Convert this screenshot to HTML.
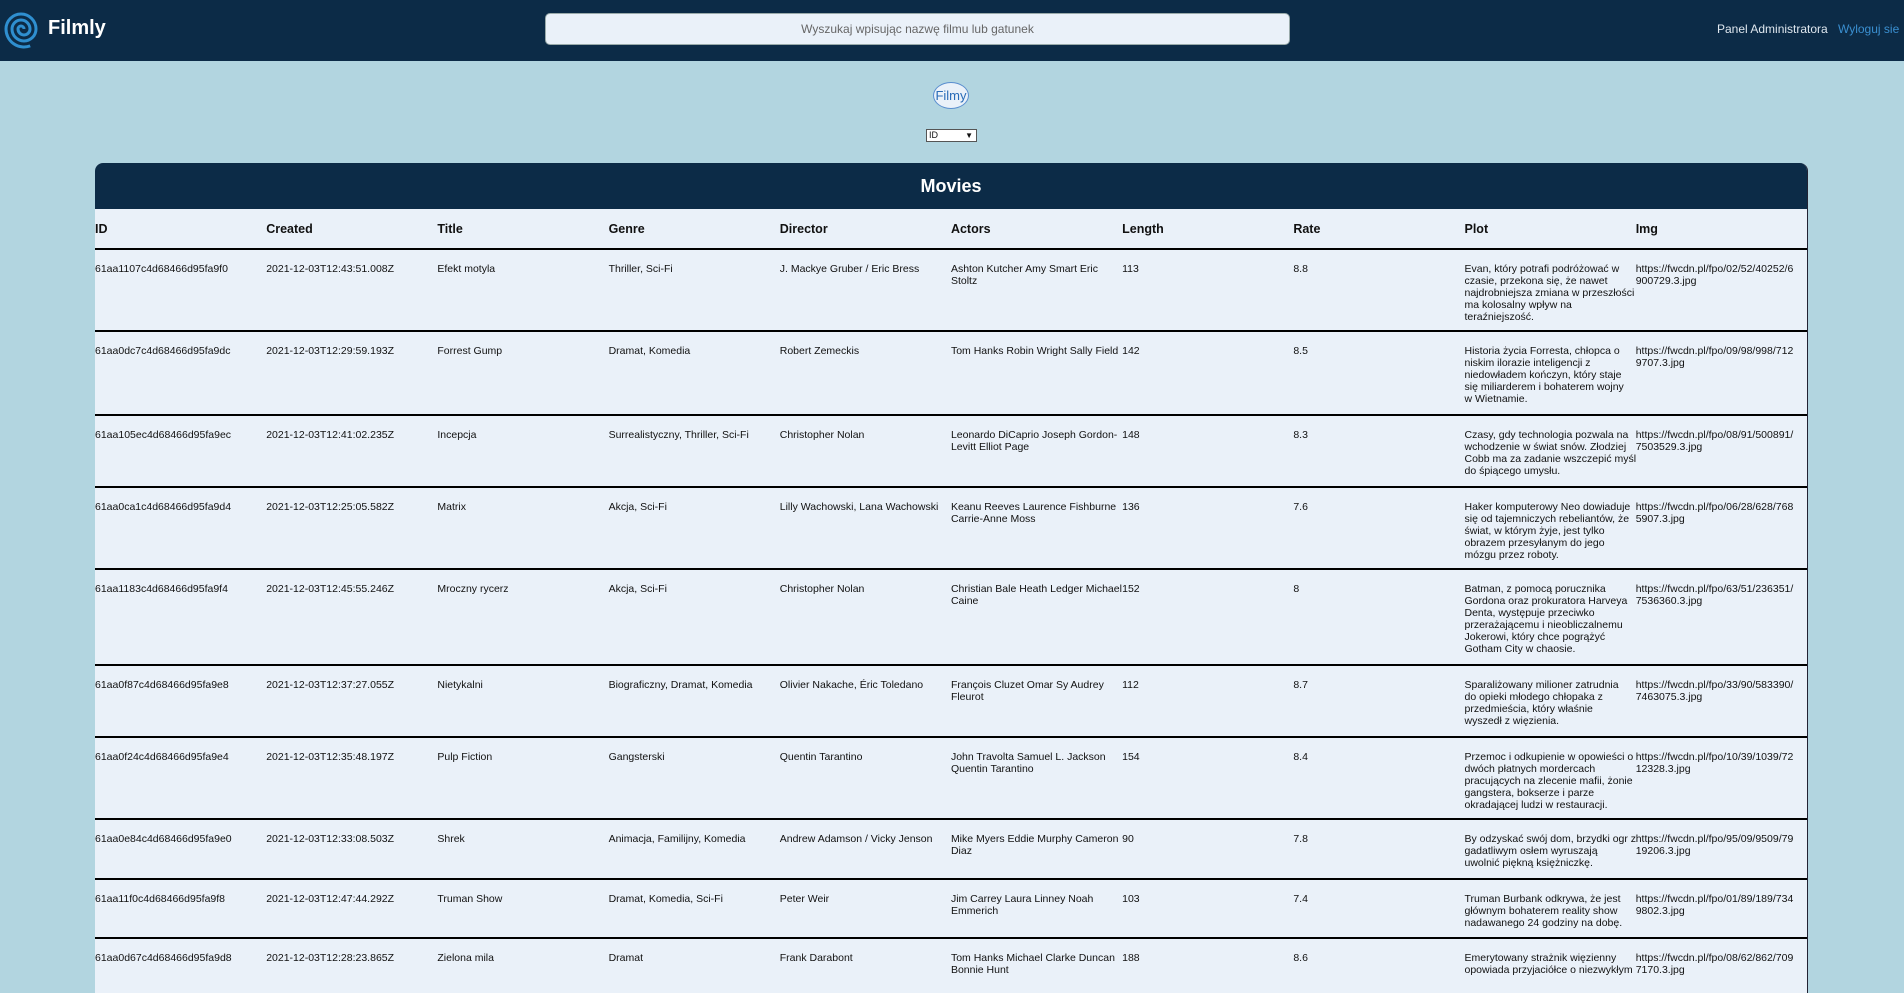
<!DOCTYPE html>
<html><head><meta charset="utf-8"><style>
*{box-sizing:border-box;margin:0;padding:0}
body{width:1904px;height:980px;overflow:hidden;background:#b2d5e0;font-family:"Liberation Sans",sans-serif;color:#111;position:relative}
.hdr{position:absolute;left:0;top:0;width:1904px;height:61px;background:#0c2b47}
.logo{position:absolute;left:0;top:0}
.brand{position:absolute;left:48px;top:17px;color:#fff;font-weight:bold;font-size:20px}
.search{position:absolute;left:545px;top:13px;width:745px;height:32px;background:#eaf1f9;border:1px solid #9aa;border-radius:5px;text-align:center;line-height:30px;font-size:12px;color:#666}
.nav{position:absolute;top:22px;font-size:12px;color:#dfe7ef}
.btn{position:absolute;left:933px;top:82px;width:36px;height:27px;border:1px solid #5a8ecf;border-radius:50%;background:#eaf1f9;color:#2a6cb8;font-size:13px;text-align:center;line-height:25px}
.sel{position:absolute;left:926px;top:129px;width:51px;height:13px;border:1px solid #555;background:#fff;font-size:9px;line-height:11px;padding-left:2px}
.sel span{position:absolute;right:3px;top:0;font-size:8px}
.card{position:absolute;left:95px;top:163px;width:1713px;height:830px;background:#eaf1f9;border-radius:8px 8px 0 0;overflow:hidden;border-right:1px solid #223}
.ch{height:46px;background:#0c2b47;color:#fff;font-weight:bold;font-size:18px;text-align:center;line-height:46px}
table{border-collapse:collapse;table-layout:fixed;width:1712px;font-size:10.5px}
td,th{width:171.2px;vertical-align:top;text-align:left;white-space:nowrap;line-height:12px}
th{height:40px;vertical-align:middle;font-size:12.5px;padding-top:0}
tr{border-bottom:2px solid #000}
td{padding-top:13px}
</style></head><body>
<div class="hdr">
<svg class="logo" width="48" height="61" viewBox="0 0 48 61"><path d="M24 29 A3 3 0 0 0 18 29 A6 6 0 0 0 30 29 A9 9 0 0 0 12 29 A12 12 0 0 0 36 29 A15 15 0 0 0 6 29 A18 18 0 0 0 30.2 45.9" fill="none" stroke="#2f8fd0" stroke-width="3"/></svg>
<div class="brand">Filmly</div>
<div class="search">Wyszukaj wpisując nazwę filmu lub gatunek</div>
<div class="nav" style="left:1717px">Panel Administratora</div>
<div class="nav" style="left:1838px;color:#3a8fd0">Wyloguj sie</div>
</div>
<div class="btn">Filmy</div>
<div class="sel">ID<span>&#9660;</span></div>
<div class="card">
<div class="ch">Movies</div>
<table>
<tr><th>ID</th><th>Created</th><th>Title</th><th>Genre</th><th>Director</th><th>Actors</th><th>Length</th><th>Rate</th><th>Plot</th><th>Img</th></tr>
<tr style="height:82px"><td>61aa1107c4d68466d95fa9f0</td><td>2021-12-03T12:43:51.008Z</td><td>Efekt motyla</td><td>Thriller, Sci-Fi</td><td>J. Mackye Gruber / Eric Bress</td><td>Ashton Kutcher Amy Smart Eric<br>Stoltz</td><td>113</td><td>8.8</td><td>Evan, który potrafi podróżować w<br>czasie, przekona się, że nawet<br>najdrobniejsza zmiana w przeszłości<br>ma kolosalny wpływ na<br>teraźniejszość.</td><td>https://fwcdn.pl/fpo/02/52/40252/6<br>900729.3.jpg</td></tr>
<tr style="height:84px"><td>61aa0dc7c4d68466d95fa9dc</td><td>2021-12-03T12:29:59.193Z</td><td>Forrest Gump</td><td>Dramat, Komedia</td><td>Robert Zemeckis</td><td>Tom Hanks Robin Wright Sally Field</td><td>142</td><td>8.5</td><td>Historia życia Forresta, chłopca o<br>niskim ilorazie inteligencji z<br>niedowładem kończyn, który staje<br>się miliarderem i bohaterem wojny<br>w Wietnamie.</td><td>https://fwcdn.pl/fpo/09/98/998/712<br>9707.3.jpg</td></tr>
<tr style="height:72px"><td>61aa105ec4d68466d95fa9ec</td><td>2021-12-03T12:41:02.235Z</td><td>Incepcja</td><td>Surrealistyczny, Thriller, Sci-Fi</td><td>Christopher Nolan</td><td>Leonardo DiCaprio Joseph Gordon-<br>Levitt Elliot Page</td><td>148</td><td>8.3</td><td>Czasy, gdy technologia pozwala na<br>wchodzenie w świat snów. Złodziej<br>Cobb ma za zadanie wszczepić myśl<br>do śpiącego umysłu.</td><td>https://fwcdn.pl/fpo/08/91/500891/<br>7503529.3.jpg</td></tr>
<tr style="height:82px"><td>61aa0ca1c4d68466d95fa9d4</td><td>2021-12-03T12:25:05.582Z</td><td>Matrix</td><td>Akcja, Sci-Fi</td><td>Lilly Wachowski, Lana Wachowski</td><td>Keanu Reeves Laurence Fishburne<br>Carrie-Anne Moss</td><td>136</td><td>7.6</td><td>Haker komputerowy Neo dowiaduje<br>się od tajemniczych rebeliantów, że<br>świat, w którym żyje, jest tylko<br>obrazem przesyłanym do jego<br>mózgu przez roboty.</td><td>https://fwcdn.pl/fpo/06/28/628/768<br>5907.3.jpg</td></tr>
<tr style="height:96px"><td>61aa1183c4d68466d95fa9f4</td><td>2021-12-03T12:45:55.246Z</td><td>Mroczny rycerz</td><td>Akcja, Sci-Fi</td><td>Christopher Nolan</td><td>Christian Bale Heath Ledger Michael<br>Caine</td><td>152</td><td>8</td><td>Batman, z pomocą porucznika<br>Gordona oraz prokuratora Harveya<br>Denta, występuje przeciwko<br>przerażającemu i nieobliczalnemu<br>Jokerowi, który chce pogrążyć<br>Gotham City w chaosie.</td><td>https://fwcdn.pl/fpo/63/51/236351/<br>7536360.3.jpg</td></tr>
<tr style="height:72px"><td>61aa0f87c4d68466d95fa9e8</td><td>2021-12-03T12:37:27.055Z</td><td>Nietykalni</td><td>Biograficzny, Dramat, Komedia</td><td>Olivier Nakache, Éric Toledano</td><td>François Cluzet Omar Sy Audrey<br>Fleurot</td><td>112</td><td>8.7</td><td>Sparaliżowany milioner zatrudnia<br>do opieki młodego chłopaka z<br>przedmieścia, który właśnie<br>wyszedł z więzienia.</td><td>https://fwcdn.pl/fpo/33/90/583390/<br>7463075.3.jpg</td></tr>
<tr style="height:82px"><td>61aa0f24c4d68466d95fa9e4</td><td>2021-12-03T12:35:48.197Z</td><td>Pulp Fiction</td><td>Gangsterski</td><td>Quentin Tarantino</td><td>John Travolta Samuel L. Jackson<br>Quentin Tarantino</td><td>154</td><td>8.4</td><td>Przemoc i odkupienie w opowieści o<br>dwóch płatnych mordercach<br>pracujących na zlecenie mafii, żonie<br>gangstera, bokserze i parze<br>okradającej ludzi w restauracji.</td><td>https://fwcdn.pl/fpo/10/39/1039/72<br>12328.3.jpg</td></tr>
<tr style="height:60px"><td>61aa0e84c4d68466d95fa9e0</td><td>2021-12-03T12:33:08.503Z</td><td>Shrek</td><td>Animacja, Familijny, Komedia</td><td>Andrew Adamson / Vicky Jenson</td><td>Mike Myers Eddie Murphy Cameron<br>Diaz</td><td>90</td><td>7.8</td><td>By odzyskać swój dom, brzydki ogr z<br>gadatliwym osłem wyruszają<br>uwolnić piękną księżniczkę.</td><td>https://fwcdn.pl/fpo/95/09/9509/79<br>19206.3.jpg</td></tr>
<tr style="height:59px"><td>61aa11f0c4d68466d95fa9f8</td><td>2021-12-03T12:47:44.292Z</td><td>Truman Show</td><td>Dramat, Komedia, Sci-Fi</td><td>Peter Weir</td><td>Jim Carrey Laura Linney Noah<br>Emmerich</td><td>103</td><td>7.4</td><td>Truman Burbank odkrywa, że jest<br>głównym bohaterem reality show<br>nadawanego 24 godziny na dobę.</td><td>https://fwcdn.pl/fpo/01/89/189/734<br>9802.3.jpg</td></tr>
<tr style="height:80px"><td>61aa0d67c4d68466d95fa9d8</td><td>2021-12-03T12:28:23.865Z</td><td>Zielona mila</td><td>Dramat</td><td>Frank Darabont</td><td>Tom Hanks Michael Clarke Duncan<br>Bonnie Hunt</td><td>188</td><td>8.6</td><td>Emerytowany strażnik więzienny<br>opowiada przyjaciółce o niezwykłym</td><td>https://fwcdn.pl/fpo/08/62/862/709<br>7170.3.jpg</td></tr>
</table>
</div>
</body></html>
